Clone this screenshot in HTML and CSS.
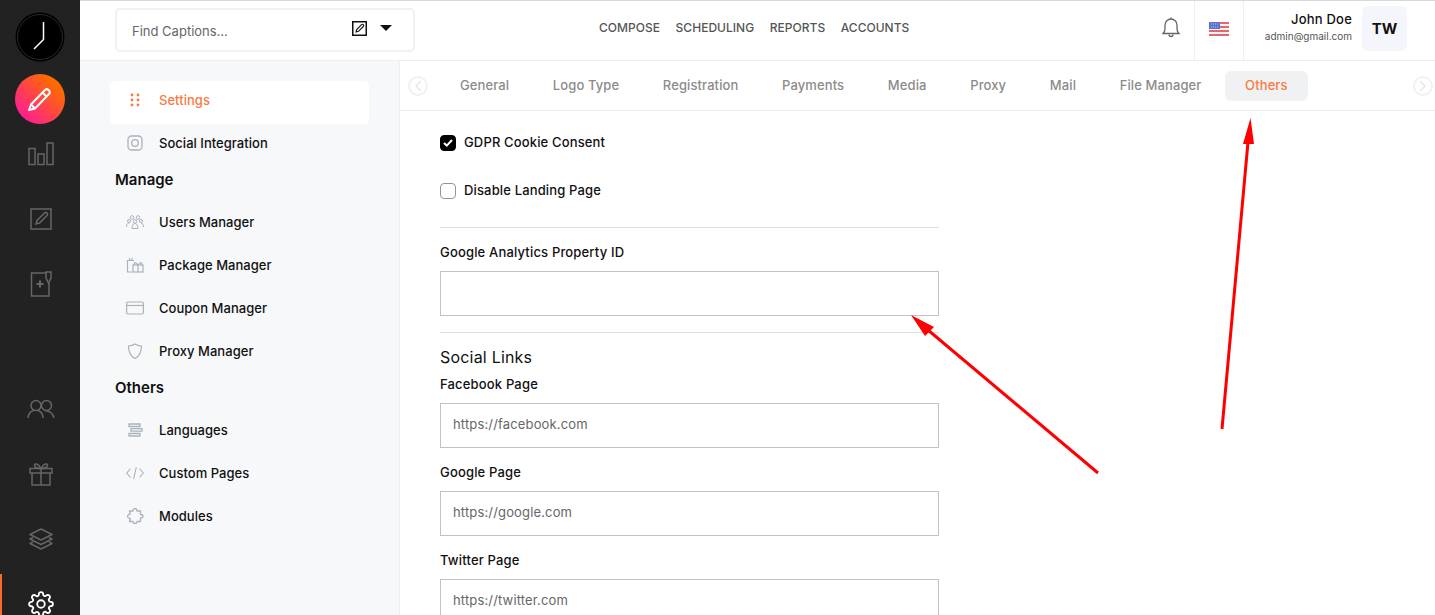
FILE: index.html
```html
<!DOCTYPE html>
<html lang="en">
  <head>
    <meta charset="UTF-8" />
    <meta name="viewport" content="width=device-width, initial-scale=1.0" />
    <title>Settings</title>
    <link rel="stylesheet" href="styles.css">
  </head>
  <body>
    <div class="app">
      <!-- Left icon rail -->
      <aside class="rail">
        <div class="logo">
          <svg width="50" height="50" viewBox="0 0 50 50">
            <circle cx="25" cy="25" r="24.5" fill="#000" />
            <circle cx="25" cy="25" r="22.5" fill="none" stroke="#2a2a2a" stroke-width="1" />
            <path d="M28.5 10V27.5L19 37" fill="none" stroke="#fff" stroke-width="1.5" />
          </svg>
        </div>
        <div class="compose">
          <svg width="26" height="26" viewBox="0 0 26 26" fill="none" stroke="#fff" stroke-width="2" stroke-linejoin="round">
            <path d="M4 18.5L18 4a2.5 2.5 0 0 1 3.500 0l.5.5a2.500 2.500 0 0 1 0 3.500L8 22.500l-6 1.500z" />
            <path d="M15.500 6.500l4 4M4 18.500l4 4" />
          </svg>
        </div>
        <div class="rail-item rail-item-first">
          <svg width="26" height="24" viewBox="0 0 26 24" fill="none" stroke="#666" stroke-width="1.500">
            <rect x="1" y="6.500" width="6" height="16" />
            <rect x="10" y="12" width="6" height="10.500" />
            <rect x="19" y="1" width="6" height="21.500" />
          </svg>
        </div>
        <div class="rail-item">
          <svg width="22" height="22" viewBox="0 0 22 22" fill="none" stroke="#666" stroke-width="1.500">
            <rect x="1" y="1" width="20" height="20" />
            <path d="M6 16l1-3.500 7.500-7.500a1.500 1.500 0 0 1 2.500 2.500L9.500 15z" />
          </svg>
        </div>
        <div class="rail-item">
          <svg width="22" height="26" viewBox="0 0 22 26" fill="none" stroke="#666" stroke-width="1.500">
            <path d="M16 2H1.500V25H19V12" />
            <path d="M16 1h5v6l-2.500 5L16 7z" />
            <path d="M6.500 13h7M10 9.500v7" stroke-width="2" />
          </svg>
        </div>
        <div class="rail-item rail-item-low">
          <svg width="28" height="20" viewBox="0 0 28 20" fill="none" stroke="#666" stroke-width="1.500">
            <circle cx="9" cy="6.500" r="5" />
            <circle cx="19.500" cy="6.500" r="5" />
            <path d="M1 19c0-4 3-7.500 6-7.500M11 11.500c3 1 5 4 5 7.500M17.500 11.500c5 0 9 3.500 9.500 7.500" />
          </svg>
        </div>
        <div class="rail-item">
          <svg width="24" height="24" viewBox="0 0 24 24" fill="none" stroke="#666" stroke-width="1.500">
            <rect x="1" y="6.500" width="22" height="4.500" />
            <path d="M3 11v12h18V11M12 6.500V23" />
            <path d="M12 6.500C9 1 5 1 5.500 3.500 6 6 9 6.500 12 6.500zM12 6.500C15 1 19 1 18.500 3.500 18 6 15 6.500 12 6.500z" />
          </svg>
        </div>
        <div class="rail-item">
          <svg width="24" height="22" viewBox="0 0 24 22" fill="none" stroke="#666" stroke-width="1.500" stroke-linejoin="round">
            <path d="M12 1l11 5.500-11 5.500L1 6.500z" />
            <path d="M4 9.500l-3 1.500 11 5.500L23 11l-3-1.500" />
            <path d="M4 14l-3 1.500L12 21l11-5.500L20 14" />
          </svg>
        </div>
        <div class="rail-item rail-item-active">
          <svg width="26" height="26" viewBox="0 0 24 24" fill="none" stroke="#fff" stroke-width="1.700" stroke-linejoin="round">
            <circle cx="12" cy="12" r="3.500" />
            <path d="M19.400 15a1.650 1.650 0 0 0 .33 1.820l.06.06a2 2 0 0 1 0 2.830 2 2 0 0 1-2.830 0l-.06-.06a1.650 1.650 0 0 0-1.820-.33 1.650 1.650 0 0 0-1 1.510V21a2 2 0 0 1-2 2 2 2 0 0 1-2-2v-.09A1.650 1.650 0 0 0 9 19.400a1.650 1.650 0 0 0-1.820.33l-.06.06a2 2 0 0 1-2.830 0 2 2 0 0 1 0-2.830l.06-.06a1.650 1.650 0 0 0 .33-1.820 1.650 1.650 0 0 0-1.510-1H3a2 2 0 0 1-2-2 2 2 0 0 1 2-2h.09A1.650 1.650 0 0 0 4.600 9a1.650 1.650 0 0 0-.33-1.820l-.06-.06a2 2 0 0 1 0-2.830 2 2 0 0 1 2.830 0l.06.06a1.650 1.650 0 0 0 1.820.33H9a1.650 1.650 0 0 0 1-1.510V3a2 2 0 0 1 2-2 2 2 0 0 1 2 2v.09a1.650 1.650 0 0 0 1 1.510 1.650 1.650 0 0 0 1.820-.33l.06-.06a2 2 0 0 1 2.830 0 2 2 0 0 1 0 2.830l-.06.06a1.650 1.650 0 0 0-.33 1.820V9a1.650 1.650 0 0 0 1.510 1H21a2 2 0 0 1 2 2 2 2 0 0 1-2 2h-.09a1.650 1.650 0 0 0-1.510 1z" />
          </svg>
        </div>
      </aside>

      <div class="main">
        <!-- Top bar -->
        <header class="topbar">
          <div class="search">
            <span class="search-text">Find Captions...</span>
            <svg class="search-edit" width="15" height="15" viewBox="0 0 15 15" fill="none" stroke="#111">
              <rect x="0.750" y="0.750" width="13.500" height="13.500" stroke-width="1.500" />
              <path d="M4 11l.7-2.500 4.800-4.800a1 1 0 0 1 1.800 1.800L6.500 10.300z" stroke-width="1.100" />
            </svg>
            <span class="search-caret"></span>
          </div>
          <nav class="topnav">
            <a>COMPOSE</a>
            <a>SCHEDULING</a>
            <a>REPORTS</a>
            <a>ACCOUNTS</a>
          </nav>
          <div class="topright">
            <div class="bell">
              <svg width="18" height="21" viewBox="0 0 18 21" fill="none" stroke="#666" stroke-width="1.300">
                <path d="M1 16.500c1.500-1 2-2.500 2-5V8a6 6 0 0 1 12 0v3.500c0 2.500.5 4 2 5z" />
                <path d="M7 17.500a2 2 0 0 0 4 0M9 .500V2" />
              </svg>
            </div>
            <div class="lang">
              <svg width="20" height="14" viewBox="0 0 20 14">
                <rect width="20" height="14" fill="#f3f3f6" />
                <path d="M0 1h20M0 5h20M0 9h20M0 13h20" stroke="#e2686c" stroke-width="2" />
                <rect width="11" height="7" fill="#5a72cf" />
                <path d="M2 2h7M2 5h7" stroke="#b8c4ef" stroke-width="1" stroke-dasharray="1 1" />
              </svg>
            </div>
            <div class="user">
              <div class="user-text">
                <div class="user-name">John Doe</div>
                <div class="user-mail">admin@gmail.com</div>
              </div>
              <div class="avatar">TW</div>
            </div>
          </div>
        </header>

        <div class="body">
          <!-- Settings menu -->
          <nav class="sidemenu">
            <a class="menu-row menu-row-active">
              <svg class="menu-icon" width="18" height="14" viewBox="0 0 18 14" fill="#f97a3f">
                <circle cx="6" cy="2" r="1.400" /><circle cx="12" cy="2" r="1.400" />
                <circle cx="6" cy="7" r="1.400" /><circle cx="12" cy="7" r="1.400" />
                <circle cx="6" cy="12" r="1.400" /><circle cx="12" cy="12" r="1.400" />
              </svg>
              Settings
            </a>
            <a class="menu-row">
              <svg class="menu-icon" width="18" height="16" viewBox="0 0 18 16" fill="none" stroke="#aab2bb" stroke-width="1.300">
                <rect x="2" y="1" width="14" height="14" rx="3.500" />
                <circle cx="9" cy="8" r="3.300" />
              </svg>
              Social Integration
            </a>
            <h3 class="menu-heading">Manage</h3>
            <a class="menu-row">
              <svg class="menu-icon" width="18" height="14" viewBox="0 0 18 14" fill="none" stroke="#aab2bb" stroke-width="1">
                <circle cx="6" cy="2.500" r="1.800" /><circle cx="12" cy="2.500" r="1.800" />
                <circle cx="3" cy="6" r="1.500" /><circle cx="15" cy="6" r="1.500" /><circle cx="9" cy="6.500" r="1.800" />
                <path d="M.500 12c0-2.500 1-4 2.500-4M17.500 12c0-2.500-1-4-2.500-4M6 13.500c0-3 1.200-5 3-5s3 2 3 5z" />
              </svg>
              Users Manager
            </a>
            <a class="menu-row">
              <svg class="menu-icon" width="18" height="16" viewBox="0 0 18 16" fill="none" stroke="#aab2bb" stroke-width="1.200">
                <path d="M6 15H1.500V3.500H8M3.500 3.500V1M6 3.500V1" />
                <rect x="7" y="8" width="10" height="7" />
                <path d="M12 8v7M12 8c-3-4-4.500-2-3.500 0M12 8c3-4 4.500-2 3.500 0" />
              </svg>
              Package Manager
            </a>
            <a class="menu-row">
              <svg class="menu-icon" width="18" height="14" viewBox="0 0 18 14" fill="none" stroke="#aab2bb" stroke-width="1.200">
                <rect x="0.600" y="1" width="16.800" height="12" rx="1.500" />
                <path d="M.600 4.500h16.800" />
              </svg>
              Coupon Manager
            </a>
            <a class="menu-row">
              <svg class="menu-icon" width="18" height="16" viewBox="0 0 18 16" fill="none" stroke="#aab2bb" stroke-width="1.200">
                <path d="M9 1c2 1.300 4 1.800 6.500 2 0 6-1.500 10-6.500 12.500C4 13 2.500 9 2.500 3 5 2.800 7 2.300 9 1z" />
              </svg>
              Proxy Manager
            </a>
            <h3 class="menu-heading">Others</h3>
            <a class="menu-row">
              <svg class="menu-icon" width="18" height="14" viewBox="0 0 18 14" fill="none" stroke="#aab2bb" stroke-width="1.300">
                <path d="M3 1h11v2.500H3zM5 5.700h11v2.500H5zM3 10.500h11V13H3z" />
              </svg>
              Languages
            </a>
            <a class="menu-row">
              <svg class="menu-icon" width="20" height="14" viewBox="0 0 20 14" fill="none" stroke="#aab2bb" stroke-width="1.200">
                <path d="M5 2L.800 7 5 12M15 2l4.200 5L15 12M11.500 .500L8.500 13.500" />
              </svg>
              Custom Pages
            </a>
            <a class="menu-row">
              <svg class="menu-icon" width="18" height="16" viewBox="0 0 18 16" fill="none" stroke="#aab2bb" stroke-width="1.300" stroke-linejoin="round">
                <path d="M7 3c0-1.500 1-2.500 2-2.500S11 1.500 11 3h3.500v3.500c1.500 0 2.500 1 2.500 1.800s-1 1.700-2.500 1.700V13.500H11c0 1-1 2-2 2s-2-1-2-2H3.500l.8-3C3 10.500 1.500 9.500 1.500 8.300S3 6 4.300 6l-.8-3z" />
              </svg>
              Modules
            </a>
          </nav>

          <div class="content">
            <!-- Settings tabs -->
            <div class="tabs">
              <span class="tab-arrow tab-arrow-left">
                <svg width="8" height="12" viewBox="0 0 8 12" fill="none" stroke="#e6e7e9" stroke-width="1.500"><path d="M7 1L2 6l5 5" /></svg>
              </span>
              <a class="tab">General</a>
              <a class="tab">Logo Type</a>
              <a class="tab">Registration</a>
              <a class="tab">Payments</a>
              <a class="tab">Media</a>
              <a class="tab">Proxy</a>
              <a class="tab">Mail</a>
              <a class="tab">File Manager</a>
              <a class="tab tab-active">Others</a>
              <span class="tab-arrow tab-arrow-right">
                <svg width="8" height="12" viewBox="0 0 8 12" fill="none" stroke="#e6e7e9" stroke-width="1.500"><path d="M1 1l5 5-5 5" /></svg>
              </span>
            </div>

            <form class="form">
              <label class="check check-first">
                <span class="box box-on">
                  <svg width="10" height="8" viewBox="0 0 10 8" fill="none" stroke="#fff" stroke-width="2"><path d="M1 4l2.800 2.600L9 1" /></svg>
                </span>
                GDPR Cookie Consent
              </label>
              <label class="check">
                <span class="box"></span>
                Disable Landing Page
              </label>
              <hr class="rule rule-top" />
              <label class="field-label field-label-first">Google Analytics Property ID</label>
              <input class="input" type="text" />
              <hr class="rule rule-bottom" />
              <h3 class="section-title">Social Links</h3>
              <label class="field-label">Facebook Page</label>
              <input class="input" type="text" value="https://facebook.com" />
              <label class="field-label field-label-next">Google Page</label>
              <input class="input" type="text" value="https://google.com" />
              <label class="field-label field-label-next">Twitter Page</label>
              <input class="input" type="text" value="https://twitter.com" />
            </form>
          </div>
        </div>
      </div>

      <!-- Red annotation arrows drawn over the screenshot -->
      <svg class="arrows" width="1435" height="615" viewBox="0 0 1435 615">
        <path d="M1098 473L928 330" stroke="#fe0000" stroke-width="3" />
        <polygon points="911,315 934,327 925,336" fill="#fe0000" />
        <path d="M1222 429L1248 142" stroke="#fe0000" stroke-width="3" />
        <polygon points="1250.500,118 1243,144 1254,144" fill="#fe0000" />
      </svg>
    </div>
  </body>
</html>
```

FILE: styles.css
```css
* {
  box-sizing: border-box;
}
html,
body {
  margin: 0;
  height: 100%;
  overflow: hidden;
}
body {
  font-family: Inter, "Liberation Sans", sans-serif;
  color: #111;
  background-color: #fff;
}
.app {
  position: relative;
  display: flex;
  height: 615px;
  overflow: hidden;
}

/* rail */
.rail {
  flex: 0 0 80px;
  display: flex;
  flex-direction: column;
  align-items: center;
  gap: 5px;
  background-color: #222;
}
.logo {
  height: 50px;
  margin-top: 12px;
}
.compose {
  display: flex;
  align-items: center;
  justify-content: center;
  flex: 0 0 50px;
  width: 50px;
  margin-top: 7px;
  border-radius: 50%;
  background: linear-gradient(225deg, #ff6a00 20%, #ff1f8f 85%);
}
.rail-item {
  display: flex;
  align-items: center;
  justify-content: center;
  flex: 0 0 60px;
  width: 100%;
  padding-left: 2px;
}
.rail-item-first {
  margin-top: -5px;
}
.rail-item-low {
  margin-top: 60px;
}
.rail-item-active {
  padding-left: 0;
  border-left: 2px solid #f96a2c;
}

/* top bar */
.main {
  flex: 1;
  display: flex;
  flex-direction: column;
  min-width: 0;
}
.topbar {
  display: flex;
  align-items: stretch;
  flex: 0 0 61px;
  border-top: 1px solid #d5d8dc;
  border-bottom: 1px solid #eceef0;
}
.search {
  display: flex;
  align-items: center;
  width: 300px;
  height: 44px;
  margin: 7px 0 0 35px;
  padding-left: 15px;
  border: 2px solid #f0f1f3;
  border-radius: 5px;
}
.search-text {
  flex: 1;
  padding-top: 1px;
  font-size: 13px;
  color: #666;
}
.search-edit {
  margin-right: 13px;
  margin-top: -3px;
}
.search-caret {
  width: 0;
  height: 0;
  margin-right: 21px;
  margin-top: -5px;
  border-left: 6px solid transparent;
  border-right: 6px solid transparent;
  border-top: 6px solid #111;
}
.topnav {
  display: flex;
  align-items: center;
  gap: 15.500px;
  margin-left: 184px;
  margin-top: -6px;
  font-size: 12px;
  font-weight: 500;
  letter-spacing: 0.030px;
  color: #555;
}
.topright {
  display: flex;
  margin-left: auto;
}
.bell {
  display: flex;
  align-items: center;
  justify-content: center;
  width: 47px;
  padding-bottom: 7px;
  border-right: 1px solid #eff0f2;
}
.lang {
  display: flex;
  align-items: center;
  justify-content: center;
  width: 49px;
  padding-bottom: 4px;
  border-right: 1px solid #eff0f2;
}
.user {
  display: flex;
  align-items: flex-start;
  gap: 10px;
  padding-right: 28px;
  padding-left: 20px;
  width: 191px;
}
.user-text {
  flex: 1;
  padding-top: 10px;
  text-align: right;
}
.user-name {
  font-size: 13px;
  font-weight: 500;
  letter-spacing: 0.200px;
  color: #111;
}
.user-mail {
  margin-top: 3px;
  font-size: 10px;
  color: #555;
}
.avatar {
  display: flex;
  align-items: center;
  justify-content: center;
  width: 45px;
  height: 45px;
  margin-top: 5px;
  border-radius: 6px;
  background-color: #f5f6fb;
  font-size: 15px;
  font-weight: 700;
}

/* settings menu */
.body {
  flex: 1;
  display: flex;
  min-height: 0;
}
.sidemenu {
  flex: 0 0 320px;
  padding: 20px 30px 0 30px;
  background-color: #f7f8fa;
  border-right: 1px solid #eceef0;
}
.menu-row {
  display: flex;
  align-items: center;
  height: 43px;
  padding: 0 0 6px 16px;
  font-size: 13px;
  font-weight: 500;
  letter-spacing: 0.030px;
  color: #111;
}
.menu-row-active {
  background-color: #fff;
  border-radius: 5px;
  color: #f97a3f;
}
.menu-icon {
  flex: 0 0 auto;
  width: 18px;
  margin-right: 15px;
}
.menu-heading {
  display: flex;
  align-items: center;
  height: 36px;
  margin: 0;
  padding: 0 0 12px 5px;
  font-size: 15px;
  font-weight: 600;
  color: #111;
}

/* tabs */
.content {
  flex: 1;
  min-width: 0;
}
.tabs {
  display: flex;
  align-items: center;
  height: 50px;
  border-bottom: 1px solid #eceef0;
  padding-left: 8px;
}
.tab-arrow {
  display: flex;
  align-items: center;
  justify-content: center;
  flex: 0 0 20px;
  height: 20px;
  border: 2px solid #f0f1f2;
  border-radius: 50%;
}
.tab-arrow-left {
  margin-right: 12px;
}
.tab-arrow-right {
  margin-left: 105px;
}
.tab {
  display: flex;
  flex: 0 0 auto;
  align-items: center;
  height: 30px;
  padding: 0 20px 2px;
  margin-right: 3.700px;
  font-size: 13px;
  font-weight: 500;
  letter-spacing: 0.100px;
  white-space: nowrap;
  color: #8b8b8b;
  border-radius: 6px;
}
.tab:last-of-type {
  margin-right: 0;
}
.tab-active {
  background-color: #f0f1f3;
  color: #f97a3f;
}

/* form */
.form {
  display: flex;
  flex-direction: column;
  width: 499px;
  margin-left: 40px;
}
.check {
  display: flex;
  align-items: flex-start;
  height: 16px;
  margin-top: 32px;
  font-size: 13px;
  font-weight: 500;
  line-height: 14px;
  letter-spacing: 0.150px;
  color: #111;
}
.check-first {
  margin-top: 24px;
}
.box {
  display: flex;
  align-items: center;
  justify-content: center;
  width: 16px;
  height: 16px;
  margin-right: 8px;
  border: 1px solid #8c96a3;
  border-radius: 4px;
}
.box-on {
  border-color: #000;
  background-color: #000;
}
.rule {
  width: 100%;
  height: 1px;
  margin: 0;
  border: none;
  background-color: #dcdee0;
}
.rule-top {
  margin-top: 28px;
}
.rule-bottom {
  margin-top: 16px;
}
.field-label {
  display: block;
  height: 16px;
  margin-bottom: 10px;
  font-size: 13px;
  font-weight: 500;
  letter-spacing: 0.170px;
  line-height: 14px;
  color: #111;
}
.field-label-first {
  margin-top: 17px;
}
.field-label-next {
  margin-top: 17px;
}
.section-title {
  margin: 15px 0 11px;
  font-size: 16px;
  line-height: 18px;
  font-weight: 400;
  letter-spacing: 0.200px;
  color: #111;
}
.input {
  flex: 0 0 45px;
  width: 100%;
  padding: 0 12px 3px;
  border: 1px solid #bfc3c8;
  border-radius: 0;
  font-family: inherit;
  font-size: 13px;
  letter-spacing: 0.150px;
  color: #666;
  outline: none;
}

/* annotation */
.arrows {
  position: absolute;
  top: 0;
  left: 0;
  pointer-events: none;
}
```
